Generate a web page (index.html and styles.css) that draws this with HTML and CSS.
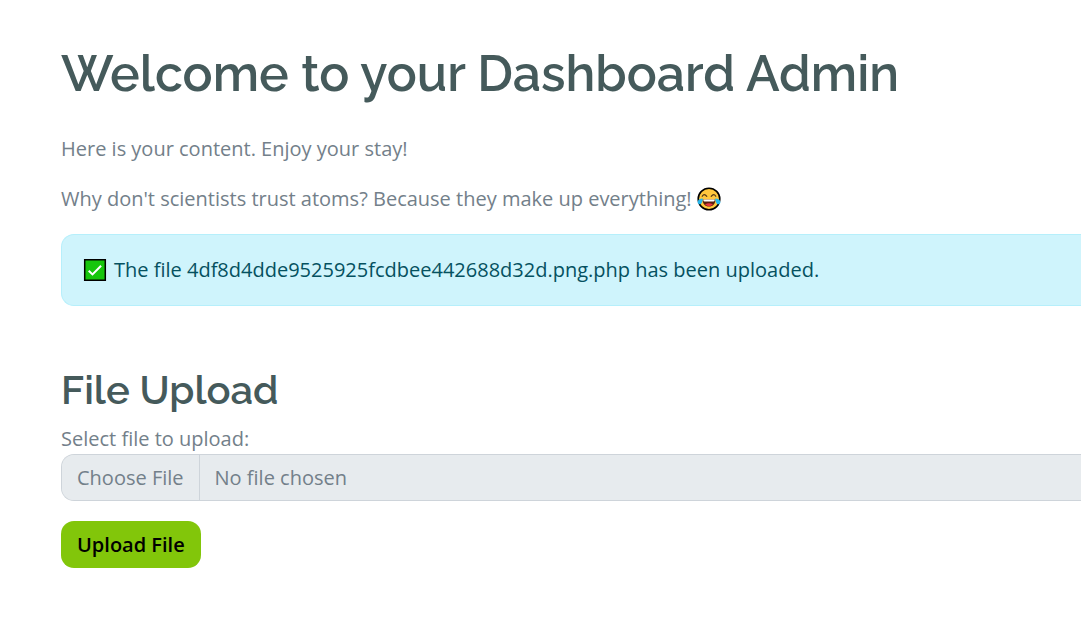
FILE: index.html
```html
<!DOCTYPE html>
<html lang="en">
<head>
<meta charset="utf-8">
<title>Dashboard</title>
<link rel="stylesheet" href="styles.css">
</head>
<body>
<main class="page">
  <h1 class="title">Welcome to your Dashboard Admin</h1>
  <p class="text">Here is your content. Enjoy your stay!</p>
  <p class="text">Why don't scientists trust atoms? Because they make up everything!
    <svg class="icon" viewBox="0 0 24 24" role="img" aria-label="Laughing">
      <circle cx="12" cy="12" r="10.8" fill="#ffc83d" stroke="#000" stroke-width="1.6"/>
      <path d="M5.2 9.3Q7.2 5.8 9.8 9.3M14.2 9.3Q16.8 5.8 18.8 9.3" fill="none" stroke="#573b16" stroke-width="1.2" stroke-linecap="round"/>
      <path d="M5.5 12.4H18.5C18.5 16.5 16 19.5 12 19.5S5.5 16.5 5.5 12.4Z" fill="#59200d"/>
      <path d="M6.4 12.4H17.6V13.6Q17.4 14.5 16.5 14.5H7.5Q6.6 14.5 6.4 13.6Z" fill="#fff"/>
      <path d="M8 17.6Q12 14.8 16 17.6Q12 21 8 17.6Z" fill="#e9343f"/>
      <path d="M5.9 11.5Q.8 11.8.6 15.1C.5 17.6 3.7 18 4.7 15.9Q5.7 14 5.9 11.5ZM18.1 11.5Q23.2 11.8 23.4 15.1C23.5 17.6 20.3 18 19.3 15.9Q18.3 14 18.1 11.5Z" fill="#26b8ed"/>
    </svg>
  </p>
  <div class="alert" role="status">
    <svg class="icon" viewBox="0 0 24 24" role="img" aria-label="Done">
      <path d="M1.7 1.7H22.3V22.3H1.7Z" fill="#16c60c" stroke="#000" stroke-width="1.5"/>
      <path d="M5.7 12.7L9.5 16.4L18.1 7.7" fill="none" stroke="#fff" stroke-width="2"/>
    </svg>
    <span>The file 4df8d4dde9525925fcdbee442688d32d.png.php has been uploaded.</span>
  </div>
  <form class="upload">
    <h2 class="subtitle">File Upload</h2>
    <label class="label" for="file">Select file to upload:</label>
    <input class="file" type="file" id="file">
    <button class="button" type="button">Upload File</button>
  </form>
</main>
</body>
</html>
```
FILE: styles.css
```css
* {
  box-sizing: border-box;
}

body {
  margin: 0;
  background: #fff;
  color: #73808a;
  font-family: "Open Sans", sans-serif;
  font-size: 20px;
  line-height: 30px;
}

.page {
  padding: 44px 0 40px 61px;
}

.title,
.subtitle {
  margin: 0;
  color: #455a5b;
  font-family: Raleway, Lato, sans-serif;
  font-weight: 600;
  white-space: nowrap;
}

.title {
  margin-bottom: 30px;
  font-size: 50px;
  line-height: 60px;
}

.text {
  margin: 0 0 20px;
}

.icon {
  width: 24px;
  height: 24px;
  vertical-align: -5px;
}

.alert {
  display: flex;
  align-items: center;
  gap: 7px;
  padding: 20px 20px 20px 21px;
  border: 1px solid #b6effb;
  border-right: 0;
  border-radius: 13px 0 0 13px;
  background: #cff4fc;
  color: #055160;
}

.upload {
  display: flex;
  flex-direction: column;
  align-items: flex-start;
  padding-top: 60px;
}

.subtitle {
  margin-bottom: 10px;
  font-size: 40px;
  line-height: 48px;
}

.file {
  width: 100%;
  height: 47px;
  margin-bottom: 20px;
  border: 1px solid #ced4da;
  border-right: 0;
  border-radius: 13px 0 0 13px;
  background: #e7ebee;
  color: inherit;
  font: inherit;
}

.file::file-selector-button {
  height: 45px;
  margin: 0 15px 0 0;
  padding: 0 15px;
  border: 0;
  border-right: 1px solid #ced4da;
  background: #e7ebee;
  color: inherit;
  font: inherit;
}

.button {
  height: 47px;
  padding: 0 16px;
  border: 0;
  border-radius: 13px;
  background: #82c60a;
  color: #000;
  font: inherit;
  font-weight: 600;
}
```
